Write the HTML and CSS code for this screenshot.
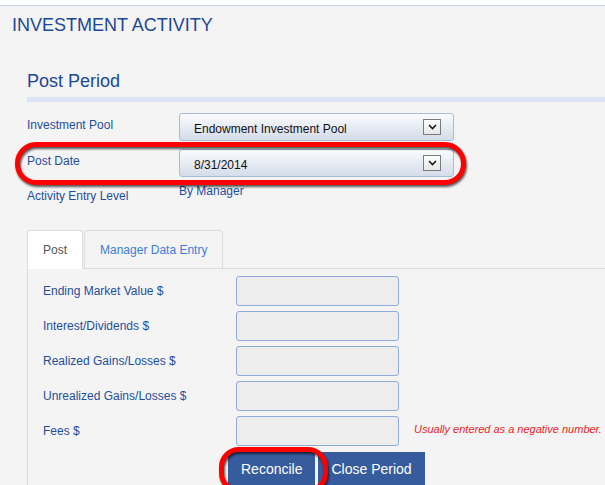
FILE: index.html
```
<!DOCTYPE html>
<html lang="en">
<head>
<meta charset="utf-8">
<title>Investment Activity</title>
<link rel="stylesheet" href="styles.css">
</head>
<body>
<div class="topbar"></div>
<h1 class="page-title">INVESTMENT ACTIVITY</h1>
<section class="panel">
  <h2 class="panel-title">Post Period</h2>
  <div class="panel-rule"></div>
  <div class="fields">
    <div class="field-label">Investment Pool</div>
    <div class="select">
      <span class="select-text">Endowment Investment Pool</span>
      <span class="drop"><svg width="9" height="6" viewBox="0 0 9 6"><path d="M1 1 L4.5 4.5 L8 1" fill="none" stroke="#1a1a1a" stroke-width="1.6"/></svg></span>
    </div>
    <div class="field-label">Post Date</div>
    <div class="select">
      <span class="select-text">8/31/2014</span>
      <span class="drop"><svg width="9" height="6" viewBox="0 0 9 6"><path d="M1 1 L4.5 4.5 L8 1" fill="none" stroke="#1a1a1a" stroke-width="1.6"/></svg></span>
    </div>
    <div class="field-label field-label-last">Activity Entry Level</div>
    <div class="field-value">By Manager</div>
  </div>

  <div class="tabs">
    <div class="tab tab-active">Post</div>
    <div class="tab">Manager Data Entry</div>
  </div>
  <div class="tab-body">
    <div class="entry-grid">
      <div class="entry-label">Ending Market Value $</div>
      <div class="entry-input"></div>
      <div></div>
      <div class="entry-label">Interest/Dividends $</div>
      <div class="entry-input"></div>
      <div></div>
      <div class="entry-label">Realized Gains/Losses $</div>
      <div class="entry-input"></div>
      <div></div>
      <div class="entry-label">Unrealized Gains/Losses $</div>
      <div class="entry-input"></div>
      <div></div>
      <div class="entry-label">Fees $</div>
      <div class="entry-input"></div>
      <div class="entry-hint">Usually entered as a negative number.</div>
    </div>
    <div class="actions">
      <button class="btn">Reconcile</button>
      <button class="btn">Close Period</button>
    </div>
  </div>
</section>
<div class="callout callout-date"></div>
<div class="callout callout-reconcile"></div>
</body>
</html>
```
FILE: styles.css
```
html, body {
  margin: 0;
  padding: 0;
}
body {
  background: #f4f4f4;
  font-family: "Liberation Sans", Arial, sans-serif;
  width: 605px;
  height: 485px;
  overflow: hidden;
  position: relative;
}
.topbar {
  height: 5px;
  background: #ffffff;
  border-bottom: 1px solid #c9d5ea;
}
.page-title {
  margin: 9px 0 0 12px;
  font-size: 18px;
  line-height: 21px;
  font-weight: normal;
  color: #1a4898;
}
.panel {
  padding-left: 27px;
}
.panel-title {
  margin: 35px 0 0 0;
  font-size: 18px;
  line-height: 21px;
  font-weight: normal;
  color: #1a4898;
}
.panel-rule {
  margin-top: 5px;
  height: 5px;
  background: #d9e3f3;
}
.fields {
  margin-top: 11px;
  display: grid;
  grid-template-columns: 152px 275px;
  grid-template-rows: 28px 28px auto;
  row-gap: 8px;
  font-size: 12px;
  line-height: 14px;
}
.field-label {
  color: #1e4e9f;
  padding-top: 5px;
}
.field-label-last {
  padding-top: 4px;
}
.field-value {
  color: #1e4e9f;
  margin-top: -1px;
}
.select {
  box-sizing: border-box;
  height: 28px;
  border: 1px solid #a8bbd8;
  border-radius: 3px;
  background: linear-gradient(#fafbfd, #d4dcea);
  display: flex;
  align-items: center;
  padding: 0 12px 0 14px;
  color: #111;
}
.select-text {
  margin-top: 3px;
}
.drop {
  margin-left: auto;
  box-sizing: border-box;
  width: 18px;
  height: 16px;
  border: 1px solid #7a7a7a;
  background: linear-gradient(#ffffff, #e6e6e6);
  display: flex;
  align-items: center;
  justify-content: center;
}
.tabs {
  margin-top: 27px;
  display: flex;
  gap: 1px;
  margin-bottom: -1px;
  position: relative;
  z-index: 1;
}
.tab {
  box-sizing: border-box;
  height: 39px;
  padding: 0 15px;
  border: 1px solid #dcdcdc;
  border-radius: 3px 3px 0 0;
  font-size: 12px;
  line-height: 14px;
  display: flex;
  align-items: center;
  color: #3c7dd6;
  background: #f4f4f4;
  padding-top: 1px;
}
.tab-active {
  background: #ffffff;
  border-bottom-color: #ffffff;
  color: #555555;
}
.tab-body {
  border-left: 1px solid #dcdcdc;
  border-top: 1px solid #dcdcdc;
  padding: 7px 0 0 15px;
}
.entry-grid {
  display: grid;
  grid-template-columns: 193px 163px auto;
  grid-auto-rows: 30px;
  row-gap: 5px;
  font-size: 12px;
  line-height: 14px;
}
.entry-label {
  align-self: center;
  color: #1e4e9f;
}
.entry-input {
  box-sizing: border-box;
  border: 1px solid #8eabdc;
  border-radius: 3px;
  background: #ededed;
}
.entry-hint {
  align-self: center;
  margin-top: -4px;
  padding-left: 15px;
  font-size: 11px;
  line-height: 13px;
  font-style: italic;
  color: #ee1c25;
  white-space: nowrap;
}
.actions {
  margin-top: 6px;
  margin-left: 185px;
  display: flex;
  gap: 3px;
}
.btn {
  font-family: "Liberation Sans", Arial, sans-serif;
  font-size: 14px;
  line-height: 16px;
  padding: 9px 13px 10px;
  border: none;
  border-radius: 0;
  background: #375c9d;
  color: #ffffff;
  margin: 0;
}
.callout {
  position: absolute;
  box-sizing: border-box;
  border: 5px solid #ff0000;
  filter: drop-shadow(1px 2px 1px rgba(0, 0, 0, 0.65));
  z-index: 5;
}
.callout-date {
  left: 15px;
  top: 142px;
  width: 451px;
  height: 43px;
  border-radius: 21px;
}
.callout-reconcile {
  left: 219px;
  top: 447px;
  width: 109px;
  height: 46px;
  border-radius: 20px;
}
```
